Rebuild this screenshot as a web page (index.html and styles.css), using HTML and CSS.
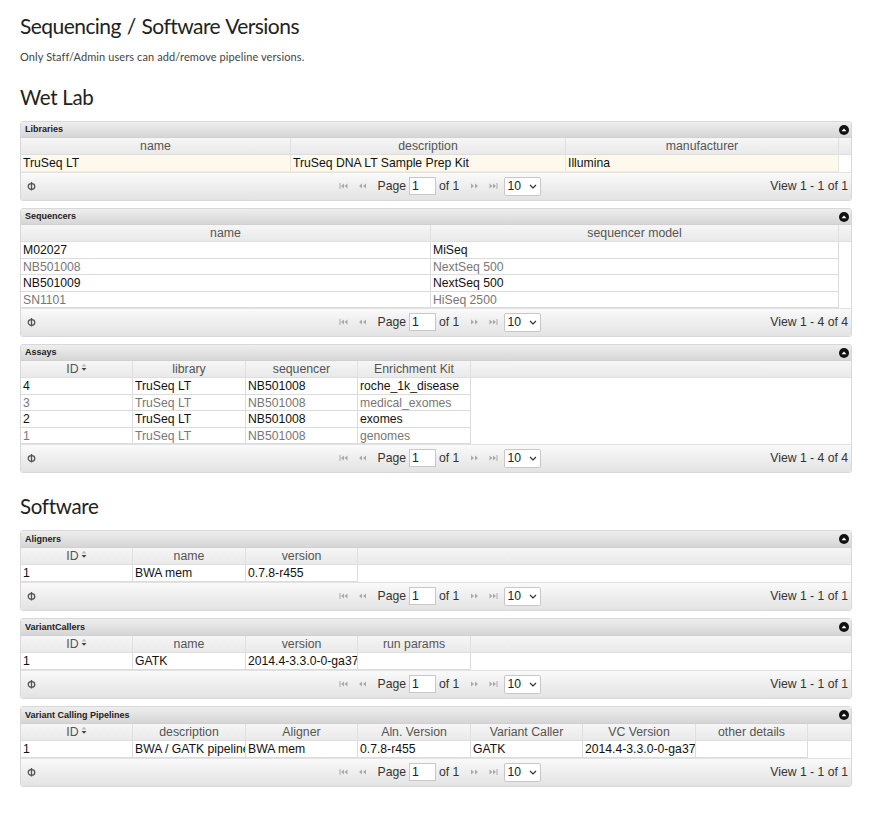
FILE: index.html
```html
<!DOCTYPE html>
<html>
<head>
<meta charset="utf-8">
<title>Sequencing / Software Versions</title>
<link rel="stylesheet" href="styles.css">
</head>
<body>
<div class="page">
  <h1 class="title">Sequencing / Software Versions</h1>
  <p class="note">Only Staff/Admin users can add/remove pipeline versions.</p>

  <h2 class="section">Wet Lab</h2>

  <div class="grid">
    <div class="caption"><span>Libraries</span><span class="collapse"><svg width="10" height="10" viewBox="0 0 10 10"><circle cx="5" cy="5" r="5" fill="#111"/><path d="M2.5 6.2 L5 3.6 L7.5 6.2 Z" fill="#fff"/></svg></span></div>
    <div class="hrow">
      <div class="hcell w270">name</div><div class="hcell w275">description</div><div class="hcell w273">manufacturer</div><div class="hcell fill"></div>
    </div>
    <div class="brow odd hl single"><div class="cell w270">TruSeq LT</div><div class="cell w275">TruSeq DNA LT Sample Prep Kit</div><div class="cell w273">Illumina</div></div>
    <div class="pager">
      <span class="refresh"><svg width="9" height="10" viewBox="0 0 9 10"><ellipse cx="4.5" cy="5.5" rx="3.3" ry="2.8" fill="none" stroke="#555" stroke-width="1.3"/><path d="M4.5 1 V9.5" stroke="#555" stroke-width="1.3"/></svg></span>
      <div class="pgcenter">
        <span class="pico"><svg width="9" height="6" viewBox="0 0 9 6"><path d="M1 0 V6" stroke="#aaa" stroke-width="1"/><path d="M5 0.5 L2 3 L5 5.5 Z M8.5 0.5 L5.5 3 L8.5 5.5 Z" fill="#aaa"/></svg></span>
        <span class="pico"><svg width="9" height="6" viewBox="0 0 9 6"><path d="M4 0.5 L1 3 L4 5.5 Z M8 0.5 L5 3 L8 5.5 Z" fill="#aaa"/></svg></span>
        <span class="sep"></span>
        <span class="ptxt">Page</span><span class="pinput">1</span><span class="ptxt">of 1</span>
        <span class="sep"></span>
        <span class="pico"><svg width="9" height="6" viewBox="0 0 9 6"><path d="M1 0.5 L4 3 L1 5.5 Z M5 0.5 L8 3 L5 5.5 Z" fill="#aaa"/></svg></span>
        <span class="pico"><svg width="9" height="6" viewBox="0 0 9 6"><path d="M0.5 0.5 L3.5 3 L0.5 5.5 Z M4 0.5 L7 3 L4 5.5 Z" fill="#aaa"/><path d="M8 0 V6" stroke="#aaa" stroke-width="1"/></svg></span>
        <span class="psel">10<svg class="chev" width="8" height="5" viewBox="0 0 8 5"><path d="M1 1 L4 4 L7 1" fill="none" stroke="#333" stroke-width="1.2"/></svg></span>
      </div>
      <span class="view">View 1 - 1 of 1</span>
    </div>
  </div>

  <div class="grid">
    <div class="caption"><span>Sequencers</span><span class="collapse"><svg width="10" height="10" viewBox="0 0 10 10"><circle cx="5" cy="5" r="5" fill="#111"/><path d="M2.5 6.2 L5 3.6 L7.5 6.2 Z" fill="#fff"/></svg></span></div>
    <div class="hrow">
      <div class="hcell w410">name</div><div class="hcell w408">sequencer model</div><div class="hcell fill"></div>
    </div>
    <div class="brow odd"><div class="cell w410">M02027</div><div class="cell w408">MiSeq</div></div>
    <div class="brow even"><div class="cell w410">NB501008</div><div class="cell w408">NextSeq 500</div></div>
    <div class="brow odd"><div class="cell w410">NB501009</div><div class="cell w408">NextSeq 500</div></div>
    <div class="brow even"><div class="cell w410">SN1101</div><div class="cell w408">HiSeq 2500</div></div>
    <div class="pager">
      <span class="refresh"><svg width="9" height="10" viewBox="0 0 9 10"><ellipse cx="4.5" cy="5.5" rx="3.3" ry="2.8" fill="none" stroke="#555" stroke-width="1.3"/><path d="M4.5 1 V9.5" stroke="#555" stroke-width="1.3"/></svg></span>
      <div class="pgcenter">
        <span class="pico"><svg width="9" height="6" viewBox="0 0 9 6"><path d="M1 0 V6" stroke="#aaa" stroke-width="1"/><path d="M5 0.5 L2 3 L5 5.5 Z M8.5 0.5 L5.5 3 L8.5 5.5 Z" fill="#aaa"/></svg></span>
        <span class="pico"><svg width="9" height="6" viewBox="0 0 9 6"><path d="M4 0.5 L1 3 L4 5.5 Z M8 0.5 L5 3 L8 5.5 Z" fill="#aaa"/></svg></span>
        <span class="sep"></span>
        <span class="ptxt">Page</span><span class="pinput">1</span><span class="ptxt">of 1</span>
        <span class="sep"></span>
        <span class="pico"><svg width="9" height="6" viewBox="0 0 9 6"><path d="M1 0.5 L4 3 L1 5.5 Z M5 0.5 L8 3 L5 5.5 Z" fill="#aaa"/></svg></span>
        <span class="pico"><svg width="9" height="6" viewBox="0 0 9 6"><path d="M0.5 0.5 L3.5 3 L0.5 5.5 Z M4 0.5 L7 3 L4 5.5 Z" fill="#aaa"/><path d="M8 0 V6" stroke="#aaa" stroke-width="1"/></svg></span>
        <span class="psel">10<svg class="chev" width="8" height="5" viewBox="0 0 8 5"><path d="M1 1 L4 4 L7 1" fill="none" stroke="#333" stroke-width="1.2"/></svg></span>
      </div>
      <span class="view">View 1 - 4 of 4</span>
    </div>
  </div>

  <div class="grid">
    <div class="caption"><span>Assays</span><span class="collapse"><svg width="10" height="10" viewBox="0 0 10 10"><circle cx="5" cy="5" r="5" fill="#111"/><path d="M2.5 6.2 L5 3.6 L7.5 6.2 Z" fill="#fff"/></svg></span></div>
    <div class="hrow">
      <div class="hcell w112">ID<svg class="sort" width="6" height="9" viewBox="0 0 6 9"><path d="M0.5 3.5 L3 0.8 L5.5 3.5 Z" fill="#bbb"/><path d="M0.5 5 L3 7.8 L5.5 5 Z" fill="#444"/></svg></div><div class="hcell w113">library</div><div class="hcell w112">sequencer</div><div class="hcell w113">Enrichment Kit</div><div class="hcell fill"></div>
    </div>
    <div class="brow odd"><div class="cell w112">4</div><div class="cell w113">TruSeq LT</div><div class="cell w112">NB501008</div><div class="cell w113">roche_1k_disease</div></div>
    <div class="brow even"><div class="cell w112">3</div><div class="cell w113">TruSeq LT</div><div class="cell w112">NB501008</div><div class="cell w113">medical_exomes</div></div>
    <div class="brow odd"><div class="cell w112">2</div><div class="cell w113">TruSeq LT</div><div class="cell w112">NB501008</div><div class="cell w113">exomes</div></div>
    <div class="brow even"><div class="cell w112">1</div><div class="cell w113">TruSeq LT</div><div class="cell w112">NB501008</div><div class="cell w113">genomes</div></div>
    <div class="pager">
      <span class="refresh"><svg width="9" height="10" viewBox="0 0 9 10"><ellipse cx="4.5" cy="5.5" rx="3.3" ry="2.8" fill="none" stroke="#555" stroke-width="1.3"/><path d="M4.5 1 V9.5" stroke="#555" stroke-width="1.3"/></svg></span>
      <div class="pgcenter">
        <span class="pico"><svg width="9" height="6" viewBox="0 0 9 6"><path d="M1 0 V6" stroke="#aaa" stroke-width="1"/><path d="M5 0.5 L2 3 L5 5.5 Z M8.5 0.5 L5.5 3 L8.5 5.5 Z" fill="#aaa"/></svg></span>
        <span class="pico"><svg width="9" height="6" viewBox="0 0 9 6"><path d="M4 0.5 L1 3 L4 5.5 Z M8 0.5 L5 3 L8 5.5 Z" fill="#aaa"/></svg></span>
        <span class="sep"></span>
        <span class="ptxt">Page</span><span class="pinput">1</span><span class="ptxt">of 1</span>
        <span class="sep"></span>
        <span class="pico"><svg width="9" height="6" viewBox="0 0 9 6"><path d="M1 0.5 L4 3 L1 5.5 Z M5 0.5 L8 3 L5 5.5 Z" fill="#aaa"/></svg></span>
        <span class="pico"><svg width="9" height="6" viewBox="0 0 9 6"><path d="M0.5 0.5 L3.5 3 L0.5 5.5 Z M4 0.5 L7 3 L4 5.5 Z" fill="#aaa"/><path d="M8 0 V6" stroke="#aaa" stroke-width="1"/></svg></span>
        <span class="psel">10<svg class="chev" width="8" height="5" viewBox="0 0 8 5"><path d="M1 1 L4 4 L7 1" fill="none" stroke="#333" stroke-width="1.2"/></svg></span>
      </div>
      <span class="view">View 1 - 4 of 4</span>
    </div>
  </div>

  <h2 class="section sw">Software</h2>

  <div class="grid soft">
    <div class="caption"><span>Aligners</span><span class="collapse"><svg width="10" height="10" viewBox="0 0 10 10"><circle cx="5" cy="5" r="5" fill="#111"/><path d="M2.5 6.2 L5 3.6 L7.5 6.2 Z" fill="#fff"/></svg></span></div>
    <div class="hrow">
      <div class="hcell w112">ID<svg class="sort" width="6" height="9" viewBox="0 0 6 9"><path d="M0.5 3.5 L3 0.8 L5.5 3.5 Z" fill="#bbb"/><path d="M0.5 5 L3 7.8 L5.5 5 Z" fill="#444"/></svg></div><div class="hcell w113">name</div><div class="hcell w112">version</div><div class="hcell fill"></div>
    </div>
    <div class="brow odd single"><div class="cell w112">1</div><div class="cell w113">BWA mem</div><div class="cell w112">0.7.8-r455</div></div>
    <div class="pager">
      <span class="refresh"><svg width="9" height="10" viewBox="0 0 9 10"><ellipse cx="4.5" cy="5.5" rx="3.3" ry="2.8" fill="none" stroke="#555" stroke-width="1.3"/><path d="M4.5 1 V9.5" stroke="#555" stroke-width="1.3"/></svg></span>
      <div class="pgcenter">
        <span class="pico"><svg width="9" height="6" viewBox="0 0 9 6"><path d="M1 0 V6" stroke="#aaa" stroke-width="1"/><path d="M5 0.5 L2 3 L5 5.5 Z M8.5 0.5 L5.5 3 L8.5 5.5 Z" fill="#aaa"/></svg></span>
        <span class="pico"><svg width="9" height="6" viewBox="0 0 9 6"><path d="M4 0.5 L1 3 L4 5.5 Z M8 0.5 L5 3 L8 5.5 Z" fill="#aaa"/></svg></span>
        <span class="sep"></span>
        <span class="ptxt">Page</span><span class="pinput">1</span><span class="ptxt">of 1</span>
        <span class="sep"></span>
        <span class="pico"><svg width="9" height="6" viewBox="0 0 9 6"><path d="M1 0.5 L4 3 L1 5.5 Z M5 0.5 L8 3 L5 5.5 Z" fill="#aaa"/></svg></span>
        <span class="pico"><svg width="9" height="6" viewBox="0 0 9 6"><path d="M0.5 0.5 L3.5 3 L0.5 5.5 Z M4 0.5 L7 3 L4 5.5 Z" fill="#aaa"/><path d="M8 0 V6" stroke="#aaa" stroke-width="1"/></svg></span>
        <span class="psel">10<svg class="chev" width="8" height="5" viewBox="0 0 8 5"><path d="M1 1 L4 4 L7 1" fill="none" stroke="#333" stroke-width="1.2"/></svg></span>
      </div>
      <span class="view">View 1 - 1 of 1</span>
    </div>
  </div>

  <div class="grid soft">
    <div class="caption"><span>VariantCallers</span><span class="collapse"><svg width="10" height="10" viewBox="0 0 10 10"><circle cx="5" cy="5" r="5" fill="#111"/><path d="M2.5 6.2 L5 3.6 L7.5 6.2 Z" fill="#fff"/></svg></span></div>
    <div class="hrow">
      <div class="hcell w112">ID<svg class="sort" width="6" height="9" viewBox="0 0 6 9"><path d="M0.5 3.5 L3 0.8 L5.5 3.5 Z" fill="#bbb"/><path d="M0.5 5 L3 7.8 L5.5 5 Z" fill="#444"/></svg></div><div class="hcell w113">name</div><div class="hcell w112">version</div><div class="hcell w113">run params</div><div class="hcell fill"></div>
    </div>
    <div class="brow odd single"><div class="cell w112">1</div><div class="cell w113">GATK</div><div class="cell w112">2014.4-3.3.0-0-ga3711f</div><div class="cell w113"></div></div>
    <div class="pager">
      <span class="refresh"><svg width="9" height="10" viewBox="0 0 9 10"><ellipse cx="4.5" cy="5.5" rx="3.3" ry="2.8" fill="none" stroke="#555" stroke-width="1.3"/><path d="M4.5 1 V9.5" stroke="#555" stroke-width="1.3"/></svg></span>
      <div class="pgcenter">
        <span class="pico"><svg width="9" height="6" viewBox="0 0 9 6"><path d="M1 0 V6" stroke="#aaa" stroke-width="1"/><path d="M5 0.5 L2 3 L5 5.5 Z M8.5 0.5 L5.5 3 L8.5 5.5 Z" fill="#aaa"/></svg></span>
        <span class="pico"><svg width="9" height="6" viewBox="0 0 9 6"><path d="M4 0.5 L1 3 L4 5.5 Z M8 0.5 L5 3 L8 5.5 Z" fill="#aaa"/></svg></span>
        <span class="sep"></span>
        <span class="ptxt">Page</span><span class="pinput">1</span><span class="ptxt">of 1</span>
        <span class="sep"></span>
        <span class="pico"><svg width="9" height="6" viewBox="0 0 9 6"><path d="M1 0.5 L4 3 L1 5.5 Z M5 0.5 L8 3 L5 5.5 Z" fill="#aaa"/></svg></span>
        <span class="pico"><svg width="9" height="6" viewBox="0 0 9 6"><path d="M0.5 0.5 L3.5 3 L0.5 5.5 Z M4 0.5 L7 3 L4 5.5 Z" fill="#aaa"/><path d="M8 0 V6" stroke="#aaa" stroke-width="1"/></svg></span>
        <span class="psel">10<svg class="chev" width="8" height="5" viewBox="0 0 8 5"><path d="M1 1 L4 4 L7 1" fill="none" stroke="#333" stroke-width="1.2"/></svg></span>
      </div>
      <span class="view">View 1 - 1 of 1</span>
    </div>
  </div>

  <div class="grid soft">
    <div class="caption"><span>Variant Calling Pipelines</span><span class="collapse"><svg width="10" height="10" viewBox="0 0 10 10"><circle cx="5" cy="5" r="5" fill="#111"/><path d="M2.5 6.2 L5 3.6 L7.5 6.2 Z" fill="#fff"/></svg></span></div>
    <div class="hrow">
      <div class="hcell w112">ID<svg class="sort" width="6" height="9" viewBox="0 0 6 9"><path d="M0.5 3.5 L3 0.8 L5.5 3.5 Z" fill="#bbb"/><path d="M0.5 5 L3 7.8 L5.5 5 Z" fill="#444"/></svg></div><div class="hcell w113">description</div><div class="hcell w112">Aligner</div><div class="hcell w113">Aln. Version</div><div class="hcell w112">Variant Caller</div><div class="hcell w113">VC Version</div><div class="hcell w112">other details</div><div class="hcell fill"></div>
    </div>
    <div class="brow odd single"><div class="cell w112">1</div><div class="cell w113">BWA / GATK pipeline</div><div class="cell w112">BWA mem</div><div class="cell w113">0.7.8-r455</div><div class="cell w112">GATK</div><div class="cell w113">2014.4-3.3.0-0-ga3711f</div><div class="cell w112"></div></div>
    <div class="pager">
      <span class="refresh"><svg width="9" height="10" viewBox="0 0 9 10"><ellipse cx="4.5" cy="5.5" rx="3.3" ry="2.8" fill="none" stroke="#555" stroke-width="1.3"/><path d="M4.5 1 V9.5" stroke="#555" stroke-width="1.3"/></svg></span>
      <div class="pgcenter">
        <span class="pico"><svg width="9" height="6" viewBox="0 0 9 6"><path d="M1 0 V6" stroke="#aaa" stroke-width="1"/><path d="M5 0.5 L2 3 L5 5.5 Z M8.5 0.5 L5.5 3 L8.5 5.5 Z" fill="#aaa"/></svg></span>
        <span class="pico"><svg width="9" height="6" viewBox="0 0 9 6"><path d="M4 0.5 L1 3 L4 5.5 Z M8 0.5 L5 3 L8 5.5 Z" fill="#aaa"/></svg></span>
        <span class="sep"></span>
        <span class="ptxt">Page</span><span class="pinput">1</span><span class="ptxt">of 1</span>
        <span class="sep"></span>
        <span class="pico"><svg width="9" height="6" viewBox="0 0 9 6"><path d="M1 0.5 L4 3 L1 5.5 Z M5 0.5 L8 3 L5 5.5 Z" fill="#aaa"/></svg></span>
        <span class="pico"><svg width="9" height="6" viewBox="0 0 9 6"><path d="M0.5 0.5 L3.5 3 L0.5 5.5 Z M4 0.5 L7 3 L4 5.5 Z" fill="#aaa"/><path d="M8 0 V6" stroke="#aaa" stroke-width="1"/></svg></span>
        <span class="psel">10<svg class="chev" width="8" height="5" viewBox="0 0 8 5"><path d="M1 1 L4 4 L7 1" fill="none" stroke="#333" stroke-width="1.2"/></svg></span>
      </div>
      <span class="view">View 1 - 1 of 1</span>
    </div>
  </div>
</div>
</body>
</html>
```

FILE: styles.css
```css
html, body { margin: 0; padding: 0; background: #fff; }
body { font-family: "Liberation Sans", Arial, sans-serif; color: #222; }
.page { padding: 0 20px 20px 20px; }

.title {
  font-family: Lato, "Open Sans", sans-serif;
  font-weight: 400;
  font-size: 21px;
  line-height: 26px;
  margin: 13px 0 0 0;
  color: #222;
  letter-spacing: -0.55px;
  word-spacing: 1px;
}
.note {
  font-family: Lato, "Open Sans", sans-serif;
  font-size: 11px;
  line-height: 14px;
  margin: 11px 0 0 0;
  color: #444;
  letter-spacing: 0.1px;
}
.section {
  font-family: Lato, "Open Sans", sans-serif;
  font-weight: 400;
  font-size: 20.5px;
  line-height: 26px;
  margin: 20px 0 11px 0;
  color: #222;
  letter-spacing: -0.3px;
}
.section.sw { margin-top: 20px; }

.grid {
  width: 832px;
  box-sizing: border-box;
  border: 1px solid #d8d8d8;
  border-radius: 3px;
  margin-bottom: 7px;
  background: #fff;
  overflow: hidden;
}
.caption {
  height: 16px;
  box-sizing: border-box;
  display: flex;
  align-items: center;
  justify-content: space-between;
  padding: 0 2px 1px 4px;
  background: linear-gradient(#eeeeee, #d6d6d6);
  font-size: 9px;
  font-weight: bold;
  color: #222;
  border-bottom: 1px solid #d0d0d0;
}
.grid.soft .caption { height: 17px; }
.collapse { display: flex; align-items: center; padding-top: 1px; }
.collapse svg { display: block; }

.hrow {
  display: flex;
  height: 17px;
  box-sizing: border-box;
  background: linear-gradient(#f6f6f6, #e9e9e9);
  border-bottom: 1px solid #dedede;
}
.hcell {
  box-sizing: border-box;
  font-size: 12.3px;
  line-height: 15px;
  padding-top: 1px;
  color: #555;
  text-align: center;
  border-right: 1px solid #e0e0e0;
  white-space: nowrap;
  overflow: hidden;
  display: flex;
  justify-content: center;
  align-items: flex-start;
}
.hcell.fill { flex: 1; border-right: none; }
.sort { margin-left: 2px; margin-top: 1px; }

.brow { display: flex; height: 16.5px; box-sizing: border-box; }
.brow.single { height: 17px; }
.brow .cell {
  box-sizing: border-box;
  font-size: 12.2px;
  line-height: 14.5px;
  padding-top: 1px;
  padding-left: 2px;
  white-space: nowrap;
  overflow: hidden;
  border-right: 1px solid #dcdcdc;
  border-bottom: 1px solid #dcdcdc;
}
.brow.odd .cell { color: #111; }
.brow.even .cell { color: #777; }
.brow.hl .cell { background: #fdf9ec; border-bottom-color: #f3ecd6; border-right-color: #ece6d6; }

.w270 { width: 270px; }
.w275 { width: 275px; }
.w273 { width: 273px; }
.w410 { width: 410px; }
.w408 { width: 408px; }
.w112 { width: 112px; }
.w113 { width: 113px; }

.pager {
  height: 28px;
  box-sizing: border-box;
  display: flex;
  align-items: center;
  padding-bottom: 1px;
  background: linear-gradient(#fafafa 0%, #efefef 45%, #e3e3e3 100%);
  border-top: 1px solid #e2e2e2;
  font-size: 12.2px;
  color: #333;
}
.refresh { flex: 1; padding-left: 6px; display: flex; align-items: center; }
.refresh svg { display: block; }
.pgcenter {
  flex: none;
  display: flex;
  align-items: center;
  justify-content: center;
}
.pico { display: inline-flex; width: 19px; justify-content: center; align-items: center; }
.pico svg { display: block; }
.sep { width: 1px; height: 14px; margin: 0 1px; }
.ptxt { margin: 0 3px; }
.pinput {
  display: inline-block;
  width: 27px;
  height: 18px;
  box-sizing: border-box;
  border: 1px solid #c8c8c8;
  background: #fff;
  line-height: 16px;
  padding-left: 2px;
  color: #222;
}
.psel {
  display: inline-flex;
  align-items: center;
  width: 37px;
  height: 19px;
  box-sizing: border-box;
  border: 1px solid #c8c8c8;
  border-radius: 2px;
  background: #fff;
  padding-left: 2px;
  color: #222;
  margin-left: 1px;
}
.chev { margin-left: 8px; }
.view { flex: 1; text-align: right; padding-right: 3px; color: #333; }
```
